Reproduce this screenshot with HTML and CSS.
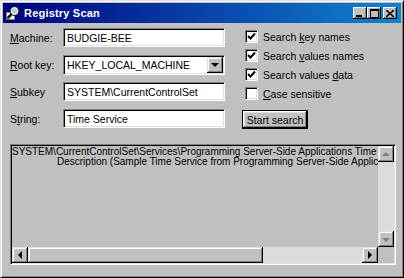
FILE: index.html
```html
<!DOCTYPE html>
<html lang="en">

<head>
    <meta charset="UTF-8">
    <title>Registry Scan</title>
    <link rel="stylesheet" href="styles.css">
</head>

<body>
    <div class="window">
        <div class="titlebar">
            <svg class="app-icon" width="16" height="16" viewBox="0 0 16 16">
                <rect x="1.5" y="7.5" width="8" height="7" fill="#fff" stroke="#808080" />
                <path d="M2 14 L6 10" stroke="#008000" stroke-width="2.5" />
                <circle cx="9.5" cy="6" r="4.5" fill="#e8e8e8" stroke="#000" />
                <circle cx="9.5" cy="6" r="2.5" fill="#9fd8d8" />
                <path d="M6.5 9 L3 12.5" stroke="#000" stroke-width="2" />
            </svg>
            <span class="title">Registry Scan</span>
            <div class="controls">
                <div class="cbtn">
                    <svg width="8" height="7" viewBox="0 0 8 7"><rect x="0" y="5" width="6" height="2" fill="#000" /></svg>
                </div>
                <div class="cbtn">
                    <svg width="9" height="9" viewBox="0 0 9 9"><path d="M0.5 1.5 H8.5 V8.5 H0.5 Z" fill="none" stroke="#000" /><rect x="0" y="0" width="9" height="2" fill="#000" /></svg>
                </div>
                <div class="cbtn close">
                    <svg width="8" height="7" viewBox="0 0 8 7"><path d="M0 0 L8 7 M8 0 L0 7" stroke="#000" stroke-width="1.6" /></svg>
                </div>
            </div>
        </div>

        <div class="main">
            <div class="top">
                <div class="fields">
                    <label><u>M</u>achine:</label>
                    <div class="edit">BUDGIE-BEE</div>
                    <label><u>R</u>oot key:</label>
                    <div class="edit combo">
                        <span>HKEY_LOCAL_MACHINE</span>
                        <div class="drop"><span class="tri-down"></span></div>
                    </div>
                    <label><u>S</u>ubkey</label>
                    <div class="edit">SYSTEM\CurrentControlSet</div>
                    <label>S<u>t</u>ring:</label>
                    <div class="edit">Time Service</div>
                </div>

                <div class="options">
                    <div class="option">
                        <span class="check on"><svg width="9" height="9" viewBox="0 0 9 9"><path d="M1 4 L3.5 6.5 L8 1.5" fill="none" stroke="#000" stroke-width="2" /></svg></span>
                        <span>Search <u>k</u>ey names</span>
                    </div>
                    <div class="option">
                        <span class="check on"><svg width="9" height="9" viewBox="0 0 9 9"><path d="M1 4 L3.5 6.5 L8 1.5" fill="none" stroke="#000" stroke-width="2" /></svg></span>
                        <span>Search <u>v</u>alues names</span>
                    </div>
                    <div class="option">
                        <span class="check on"><svg width="9" height="9" viewBox="0 0 9 9"><path d="M1 4 L3.5 6.5 L8 1.5" fill="none" stroke="#000" stroke-width="2" /></svg></span>
                        <span>Search values <u>d</u>ata</span>
                    </div>
                    <div class="option">
                        <span class="check"></span>
                        <span><u>C</u>ase sensitive</span>
                    </div>
                    <button class="btn">Start search</button>
                </div>
            </div>

            <div class="listbox">
                <div class="lines">
                    <div class="line">SYSTEM\CurrentControlSet\Services\Programming Server-Side Applications Time</div>
                    <div class="line indent">Description (Sample Time Service from Programming Server-Side Applic-</div>
                </div>
                <div class="vscroll">
                    <div class="sbtn"><span class="tri-up dim"></span></div>
                    <div class="track"></div>
                    <div class="sbtn"><span class="tri-down dim"></span></div>
                </div>
                <div class="hscroll">
                    <div class="sbtn"><span class="tri-left"></span></div>
                    <div class="thumb"></div>
                    <div class="track"></div>
                    <div class="sbtn"><span class="tri-right"></span></div>
                </div>
                <div class="corner"></div>
            </div>
        </div>
    </div>
</body>

</html>
```

FILE: styles.css
```css
body {
    margin: 0;
    font-family: "Liberation Sans", Arial, sans-serif;
    font-size: 10.5px;
    color: #000;
}

.window {
    width: 404px;
    height: 278px;
    box-sizing: border-box;
    background: #c0c0c0;
    border: 1px solid;
    border-color: #dfdfdf #000 #000 #dfdfdf;
    box-shadow: inset 1px 1px #fff, inset -1px -1px #808080;
    padding: 2px;
    display: flex;
    flex-direction: column;
}

/* title bar */
.titlebar {
    height: 20px;
    background: linear-gradient(to right, #000080, #1084d0);
    display: flex;
    align-items: center;
    padding: 0 4px 0 2px;
    color: #fff;
    font-weight: bold;
    font-size: 11px;
}

.app-icon {
    margin-right: 3px;
}

.title {
    letter-spacing: 0.2px;
}

.controls {
    margin-left: auto;
    display: flex;
}

.cbtn {
    width: 14px;
    height: 12px;
    box-sizing: border-box;
    background: #c0c0c0;
    box-shadow: inset -1px -1px #000, inset 1px 1px #fff, inset -2px -2px #808080;
    display: flex;
    align-items: center;
    justify-content: center;
}

.cbtn.close {
    margin-left: 2px;
}

/* dialog body */
.main {
    flex: 1;
    padding: 5px 5px 10px 7px;
    display: flex;
    flex-direction: column;
    min-height: 0;
}

.top {
    display: flex;
    gap: 17px;
}

.fields {
    display: grid;
    grid-template-columns: 53px 162px;
    grid-auto-rows: 19px;
    row-gap: 8px;
    align-items: center;
}

.edit {
    height: 19px;
    box-sizing: border-box;
    background: #fff;
    border: 1px solid;
    border-color: #808080 #fff #fff #808080;
    box-shadow: inset 1px 1px #000, inset -1px -1px #dfdfdf;
    padding: 0 2px 0 3px;
    display: flex;
    align-items: center;
    white-space: nowrap;
}

.combo {
    height: 20px;
    padding-right: 1px;
}

.drop {
    margin-left: auto;
    width: 16px;
    height: 16px;
    box-sizing: border-box;
    background: #c0c0c0;
    box-shadow: inset -1px -1px #000, inset 1px 1px #dfdfdf, inset -2px -2px #808080, inset 2px 2px #fff;
    display: flex;
    align-items: center;
    justify-content: center;
}

.options {
    padding-top: 2px;
    display: flex;
    flex-direction: column;
    align-items: flex-start;
    gap: 6px;
}

.option {
    height: 13px;
    display: flex;
    align-items: center;
    margin-left: 3px;
    gap: 5px;
}

.check {
    width: 13px;
    height: 13px;
    box-sizing: border-box;
    background: #fff;
    border: 1px solid;
    border-color: #808080 #fff #fff #808080;
    box-shadow: inset 1px 1px #000, inset -1px -1px #dfdfdf;
    display: flex;
    align-items: center;
    justify-content: center;
}

.btn {
    margin-top: 4px;
    width: 66px;
    height: 19px;
    padding: 0;
    font: inherit;
    background: #c0c0c0;
    border: 1px solid #000;
    box-shadow: inset -1px -1px #000, inset 1px 1px #fff, inset -2px -2px #808080, inset 2px 2px #dfdfdf;
}

/* results list */
.listbox {
    flex: 1;
    margin-top: 15px;
    border: 1px solid;
    border-color: #808080 #fff #fff #808080;
    box-shadow: inset 1px 1px #000, inset -1px -1px #dfdfdf;
    padding: 1px;
    display: grid;
    grid-template-columns: 1fr 16px;
    grid-template-rows: 1fr 16px;
    min-height: 0;
}

.lines {
    overflow: hidden;
    min-width: 0;
    font-size: 10px;
    line-height: 10px;
    padding-top: 1px;
}

.line {
    white-space: nowrap;
}

.indent {
    padding-left: 45px;
}

.vscroll {
    display: flex;
    flex-direction: column;
}

.hscroll {
    display: flex;
}

.track {
    flex: 1;
    background: #dcdcdc;
}

.sbtn {
    width: 16px;
    height: 16px;
    flex-shrink: 0;
    box-sizing: border-box;
    background: #c0c0c0;
    box-shadow: inset -1px -1px #000, inset 1px 1px #dfdfdf, inset -2px -2px #808080, inset 2px 2px #fff;
    display: flex;
    align-items: center;
    justify-content: center;
}

.thumb {
    width: 235px;
    background: #c0c0c0;
    box-shadow: inset -1px -1px #000, inset 1px 1px #dfdfdf, inset -2px -2px #808080, inset 2px 2px #fff;
}

.corner {
    background: #c0c0c0;
}

/* arrow glyphs */
.tri-down,
.tri-up,
.tri-left,
.tri-right {
    width: 0;
    height: 0;
    border: 4px solid transparent;
}

.tri-down {
    border-top-color: #000;
    border-bottom: 0;
    margin-top: 1px;
}

.tri-up {
    border-bottom-color: #000;
    border-top: 0;
}

.tri-left {
    border-right-color: #000;
    border-left: 0;
}

.tri-right {
    border-left-color: #000;
    border-right: 0;
}

.tri-up.dim {
    border-bottom-color: #808080;
}

.tri-down.dim {
    border-top-color: #808080;
}
```
